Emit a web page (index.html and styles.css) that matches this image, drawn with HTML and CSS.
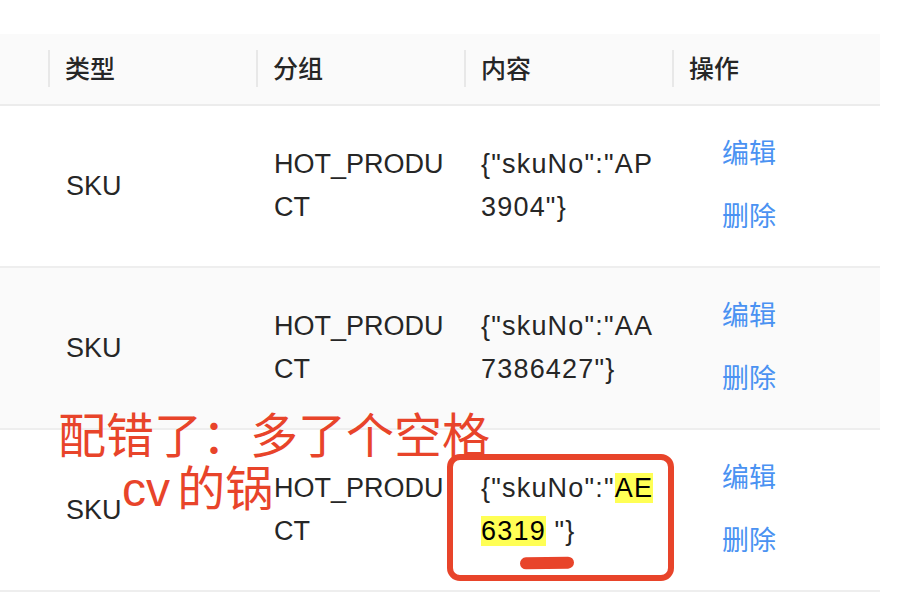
FILE: index.html
```html
<!DOCTYPE html>
<html lang="zh">
<head>
<meta charset="utf-8">
<title>SKU 配置</title>
<link rel="stylesheet" href="styles.css">
</head>
<body>
<div class="page">
  <div class="table">
    <div class="row head">
      <div class="cell first"></div>
      <div class="cell th">类型</div>
      <div class="cell th">分组</div>
      <div class="cell th">内容</div>
      <div class="cell th">操作</div>
    </div>
    <div class="row">
      <div class="cell first"></div>
      <div class="cell">SKU</div>
      <div class="cell">HOT_PRODUCT</div>
      <div class="cell content"><span class="txt">{"skuNo":"AP3904"}</span></div>
      <div class="cell actions"><a>编辑</a><a>删除</a></div>
    </div>
    <div class="row striped">
      <div class="cell first"></div>
      <div class="cell">SKU</div>
      <div class="cell">HOT_PRODUCT</div>
      <div class="cell content"><span class="txt">{"skuNo":"AA7386427"}</span></div>
      <div class="cell actions"><a>编辑</a><a>删除</a></div>
    </div>
    <div class="row">
      <div class="cell first"></div>
      <div class="cell">SKU</div>
      <div class="cell">HOT_PRODUCT</div>
      <div class="cell content"><span class="txt">{"skuNo":"<span class="hl">AE6319</span> "}</span></div>
      <div class="cell actions"><a>编辑</a><a>删除</a></div>
    </div>
  </div>

  <div class="note">
    <div class="note-line">配错了：多了个空格</div>
    <div class="note-line indent">cv 的锅</div>
  </div>
  <div class="circle"></div>
  <div class="underline"></div>
</div>
</body>
</html>
```

FILE: styles.css
```css
* { box-sizing: border-box; }

html, body {
  margin: 0;
  padding: 0;
  background: #ffffff;
}

body {
  font-family: "Liberation Sans", "Noto Sans CJK SC", sans-serif;
  color: #262626;
}

.page {
  width: 904px;
  height: 614px;
  padding-top: 34px;
  overflow: hidden;
}

.table {
  width: 880px;
}

.row {
  display: grid;
  grid-template-columns: 48px 208px 208px 208px 208px;
  height: 162px;
  border-bottom: 2px solid #eeeeee;
  background: #ffffff;
}

.row.striped {
  background: #fafafa;
}

.row.head {
  height: 72px;
  background: #fafafa;
  border-bottom: 2px solid #ececec;
}

.cell {
  display: flex;
  align-items: center;
  padding: 0 10px 0 18px;
  font-size: 27px;
  line-height: 43px;
  word-break: break-all;
}

.cell.first {
  padding: 0;
}

.th {
  position: relative;
  padding-left: 17px;
  font-size: 25px;
  font-weight: 500;
  color: #262626;
}

.th::before {
  content: "";
  position: absolute;
  left: 0;
  top: 16px;
  width: 2px;
  height: 37px;
  background: #e8e8e8;
}

.content {
  padding-left: 17px;
  letter-spacing: 1.2px;
}

.hl {
  background: #ffff55;
  color: #000000;
}

.actions {
  flex-direction: column;
  align-items: flex-start;
  justify-content: center;
  gap: 20px;
  padding-left: 50px;
}

.actions a {
  color: #4a92f2;
  cursor: pointer;
}

.note {
  position: absolute;
  left: 58px;
  top: 410px;
  color: #e8442a;
  font-size: 48px;
  line-height: 53px;
  white-space: nowrap;
}

.note-line.indent {
  margin-left: 64px;
  word-spacing: -6px;
}

.circle {
  position: absolute;
  left: 447px;
  top: 454px;
  width: 227px;
  height: 127px;
  border: 6px solid #e8442a;
  border-radius: 13px;
}

.underline {
  position: absolute;
  left: 520px;
  top: 557px;
  width: 54px;
  height: 12px;
  background: #e8442a;
  border-radius: 6px;
  transform: rotate(-1deg);
}
```
